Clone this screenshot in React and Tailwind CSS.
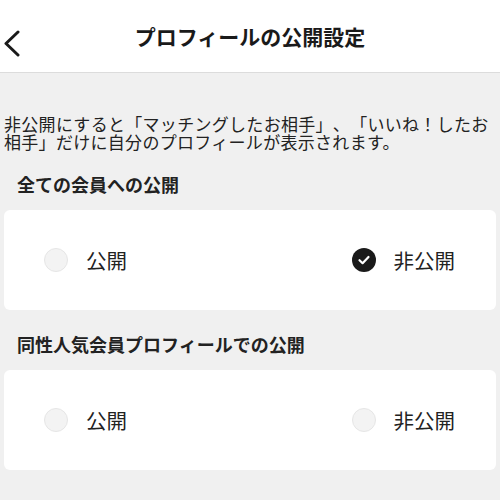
import React, { useState } from 'react';

const font = { fontFamily: '"Noto Sans CJK JP", "Noto Sans", sans-serif' };

const Radio = ({ checked, label, onClick }) => (
    <button onClick={onClick} className="flex items-center gap-[18px]">
        {checked ? (
            <span className="w-6 h-6 rounded-full bg-[#1a1a1a] flex items-center justify-center">
                <svg width="14" height="14" viewBox="0 0 14 14" fill="none">
                    <path d="M2.5 7.2 L5.6 10.2 L11.5 4" stroke="white" strokeWidth="2.2" strokeLinecap="round" strokeLinejoin="round" />
                </svg>
            </span>
        ) : (
            <span className="w-6 h-6 rounded-full bg-[#f3f3f3] border border-[#e6e6e6]" />
        )}
        <span className="text-[20.5px] leading-6 text-[#222]">{label}</span>
    </button>
);

const Section = ({ title, value, onChange, className }) => (
    <div className={className}>
        <h2 className="px-[17px] text-[18px] leading-6 font-bold text-[#222]">{title}</h2>
        <div className="mt-[14px] mx-1 h-[100px] bg-white rounded-md flex items-center justify-between pl-10 pr-[41px]">
            <Radio checked={value === 'public'} label="公開" onClick={() => onChange('public')} />
            <Radio checked={value === 'private'} label="非公開" onClick={() => onChange('private')} />
        </div>
    </div>
);

export default function App() {
    const [all, setAll] = useState('private');
    const [same, setSame] = useState(null);

    return (
        <div style={font} className="w-[500px] h-[500px] bg-[#f0f0f0] overflow-hidden [text-spacing-trim:space-all]">
            <div className="relative h-[73px] bg-white border-b border-[#dcdcdc] flex items-center justify-center">
                <button className="absolute left-[2px] top-[30px]" aria-label="戻る">
                    <svg width="20" height="28" viewBox="0 0 20 28" fill="none">
                        <path d="M16 2 L4 13.5 L16 25" stroke="#1a1a1a" strokeWidth="3" strokeLinecap="round" strokeLinejoin="round" />
                    </svg>
                </button>
                <h1 className="text-[21px] font-bold text-[#1a1a1a] leading-7 -mt-[1px]">プロフィールの公開設定</h1>
            </div>
            <p className="pt-[42px] px-1 text-[17px] leading-[18px] tracking-[0.3px] text-[#222]">
                非公開にすると「マッチングしたお相手」、「いいね！したお相手」だけに自分のプロフィールが表示されます。
            </p>
            <Section className="mt-[21px]" title="全ての会員への公開" value={all} onChange={setAll} />
            <Section className="mt-[22px]" title="同性人気会員プロフィールでの公開" value={same} onChange={setSame} />
        </div>
    );
}
